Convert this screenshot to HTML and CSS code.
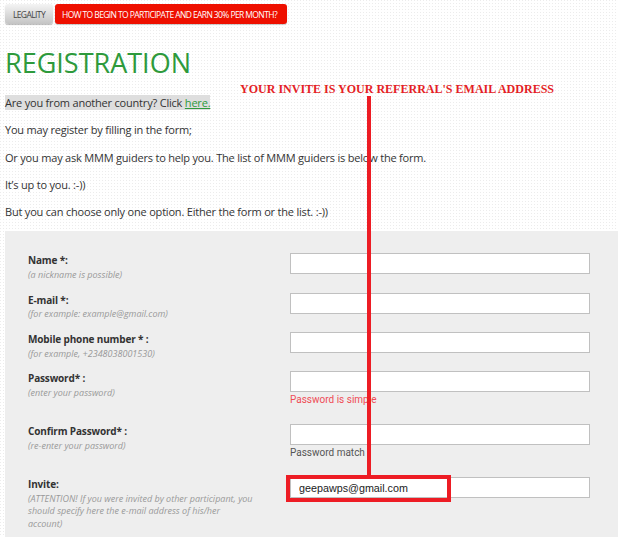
FILE: index.html
```html
<!DOCTYPE html>
<html lang="en">
<head>
<meta charset="utf-8">
<title>Registration</title>
<link rel="stylesheet" href="styles.css">
</head>
<body>
<div class="page">
  <nav class="tabs">
    <a class="tab tab-gray" href="#">LEGALITY</a>
    <a class="tab tab-red" href="#">HOW TO BEGIN TO PARTICIPATE AND EARN 30% PER MONTH?</a>
  </nav>

  <h1 class="title">REGISTRATION</h1>

  <p class="text"><span class="hl">Are you from another country? Click <a href="#">here.</a></span></p>
  <p class="text">You may register by filling in the form;</p>
  <p class="text">Or you may ask MMM guiders to help you. The list of MMM guiders is below the form.</p>
  <p class="text">It’s up to you. :-))</p>
  <p class="text">But you can choose only one option. Either the form or the list. :-))</p>

  <form class="reg">
    <div class="row">
      <div class="lbl"><div class="name">Name *:</div><div class="hint">(a nickname is possible)</div></div>
      <div class="field"><input class="inp" type="text"></div>
    </div>
    <div class="row">
      <div class="lbl"><div class="name">E-mail *:</div><div class="hint">(for example: example@gmail.com)</div></div>
      <div class="field"><input class="inp" type="text"></div>
    </div>
    <div class="row">
      <div class="lbl"><div class="name">Mobile phone number * :</div><div class="hint">(for example, +2348038001530)</div></div>
      <div class="field"><input class="inp" type="text"></div>
    </div>
    <div class="row row-msg">
      <div class="lbl"><div class="name">Password* :</div><div class="hint">(enter your password)</div></div>
      <div class="field"><input class="inp" type="password"><div class="msg msg-bad">Password is simple</div></div>
    </div>
    <div class="row row-msg">
      <div class="lbl"><div class="name">Confirm Password* :</div><div class="hint">(re-enter your password)</div></div>
      <div class="field"><input class="inp" type="password"><div class="msg msg-ok">Password match</div></div>
    </div>
    <div class="row">
      <div class="lbl"><div class="name">Invite:</div><div class="hint">(ATTENTION! If you were invited by other participant, you should specify here the e-mail address of his/her account)</div></div>
      <div class="field"><input class="inp" type="text" value="geepawps@gmail.com"></div>
    </div>
  </form>

  <div class="note">YOUR INVITE IS YOUR REFERRAL'S EMAIL ADDRESS</div>
  <div class="note-line"></div>
  <div class="note-box"></div>
</div>
</body>
</html>
```

FILE: styles.css
```css
html, body {
  margin: 0;
  padding: 0;
}
body {
  font-family: "Open Sans", sans-serif;
  color: #333;
  background: #fff conic-gradient(at 1px 1px, #fff 270deg, #ececec 0) 0 0 / 3px 3px;
}
.page {
  position: relative;
  padding: 4px 0 0 5px;
}
.tabs {
  display: flex;
  gap: 2px;
  height: 20px;
}
.tab {
  display: flex;
  align-items: center;
  box-sizing: border-box;
  height: 20px;
  border-radius: 3px;
  font-size: 8.5px;
  letter-spacing: -0.6px;
  text-decoration: none;
  white-space: nowrap;
}
.tab-gray {
  width: 48px;
  justify-content: center;
  background: linear-gradient(#f4f4f4, #c4c4c4);
  color: #444;
  box-shadow: 0 1px 1px rgba(0, 0, 0, 0.25);
}
.tab-red {
  width: 232px;
  padding-left: 7px;
  background: #ee1000;
  color: #fff;
  box-shadow: 0 1px 1px rgba(0, 0, 0, 0.2);
}
.title {
  margin: 22px 0 15px;
  font-size: 27px;
  line-height: 34px;
  font-weight: 400;
  color: #2e9a3c;
}
.text {
  margin: 0 0 12.25px;
  font-size: 11px;
  letter-spacing: -0.2px;
  line-height: 15px;
}
.hl {
  background: #dedede;
}
.hl a {
  color: #2e9a3c;
}
.reg {
  margin: 0;
  background: #eeeeee;
  padding: 22px 0 40px 23px;
}
.row {
  display: flex;
  align-items: flex-start;
  min-height: 28.4px;
  margin-bottom: 11px;
}
.row-msg {
  min-height: 42px;
}
.lbl {
  width: 262px;
  flex: none;
}
.name {
  font-weight: 700;
  font-size: 10px;
  letter-spacing: -0.15px;
  line-height: 14px;
  color: #333;
}
.hint {
  margin-top: 1.5px;
  font-style: italic;
  font-size: 9px;
  line-height: 12.5px;
  color: #999;
  max-width: 226px;
}
.field {
  width: 300px;
  flex: none;
}
.inp {
  display: block;
  box-sizing: border-box;
  width: 300px;
  height: 21px;
  margin: 0;
  padding: 0 8px;
  border: 1px solid #c0c0c0;
  border-radius: 0;
  background: #fff;
  font-family: "Liberation Sans", Arial, sans-serif;
  font-size: 10.75px;
  color: #222;
  outline: none;
}
.msg {
  margin-top: 1px;
  font-family: Roboto, sans-serif;
  font-size: 10px;
  line-height: 14px;
}
.msg-bad {
  color: #ef4c56;
}
.msg-ok {
  color: #555;
}
.note {
  position: absolute;
  left: 240px;
  top: 81px;
  font-family: "Liberation Serif", serif;
  font-weight: 700;
  font-size: 13.5px;
  line-height: 16px;
  color: #e41e26;
  white-space: nowrap;
  transform: scaleX(0.89);
  transform-origin: 0 0;
}
.note-line {
  position: absolute;
  left: 367px;
  top: 96px;
  width: 4px;
  height: 379px;
  background: #ed1c24;
}
.note-box {
  position: absolute;
  left: 286px;
  top: 475px;
  width: 165px;
  height: 27px;
  box-sizing: border-box;
  border: 4px solid #ed1c24;
}
```
